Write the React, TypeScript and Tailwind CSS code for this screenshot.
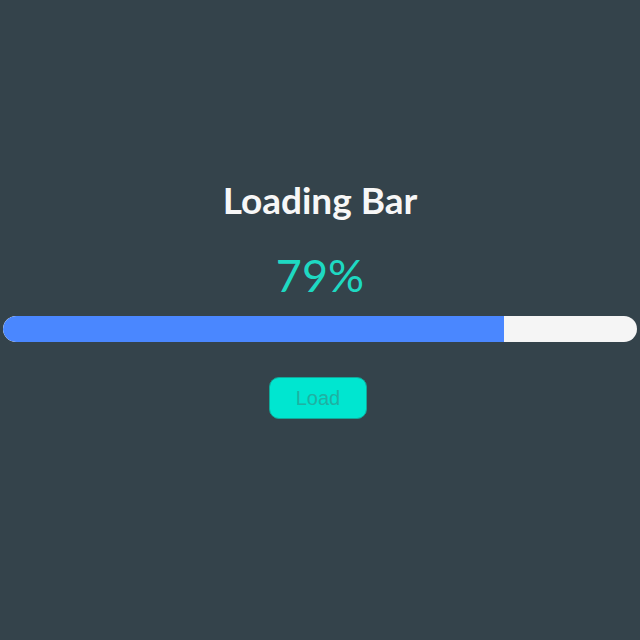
export default function App() {
  const pct = 79;
  return (
    <div className="w-[640px] h-[640px] bg-[#34434b] flex flex-col items-center pt-[177px]" style={{ fontFamily: "Lato, 'Noto Sans', sans-serif" }}>
      <h1 className="text-[37px] leading-[46px] font-bold text-[#f7f7f7]">Loading Bar</h1>
      <div className="mt-[25px] text-[45px] leading-[54px] text-[#1ed9c2]">{pct}%</div>
      <div className="mt-[14px] w-[634px] h-[26px] rounded-full bg-[#f5f5f5] overflow-hidden flex">
        <div className="h-full bg-[#4a87ff] rounded-l-full" style={{ width: `${pct}%` }} />
      </div>
      <button className="mt-[35px] mr-[4px] w-[98px] h-[42px] rounded-[10px] bg-[#00e6d0] border border-[#10a899] text-[20px] text-[#1fb0a2]" style={{ fontFamily: "'Liberation Sans', Arial, sans-serif" }}>
        Load
      </button>
    </div>
  );
}
